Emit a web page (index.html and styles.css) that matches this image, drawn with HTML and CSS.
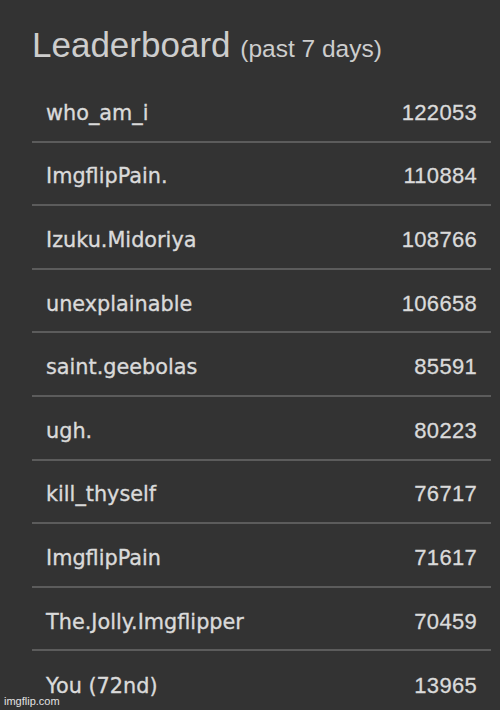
FILE: index.html
```html
<!DOCTYPE html>
<html lang="en">
<head>
<meta charset="utf-8">
<title>Leaderboard</title>
<link rel="stylesheet" href="styles.css">
</head>
<body>
<div class="board">
  <h1 class="title">Leaderboard <span class="sub">(past 7 days)</span></h1>
  <ul class="rows">
    <li class="row"><span class="name">who_am_i</span><span class="score">122053</span></li>
    <li class="row"><span class="name">ImgflipPain.</span><span class="score">110884</span></li>
    <li class="row"><span class="name">Izuku.Midoriya</span><span class="score">108766</span></li>
    <li class="row"><span class="name">unexplainable</span><span class="score">106658</span></li>
    <li class="row"><span class="name">saint.geebolas</span><span class="score">85591</span></li>
    <li class="row"><span class="name">ugh.</span><span class="score">80223</span></li>
    <li class="row"><span class="name">kill_thyself</span><span class="score">76717</span></li>
    <li class="row"><span class="name">ImgflipPain</span><span class="score">71617</span></li>
    <li class="row"><span class="name">The.Jolly.Imgflipper</span><span class="score">70459</span></li>
    <li class="row"><span class="name">You (72nd)</span><span class="score">13965</span></li>
  </ul>
</div>
<div class="watermark">imgflip.com</div>
</body>
</html>
```
FILE: styles.css
```css
html, body {
  margin: 0;
  padding: 0;
  background: #333333;
  height: 710px;
  overflow: hidden;
}
body {
  position: relative;
}
.board {
  padding: 25px 9px 0 32px;
}
.title {
  margin: 0 0 14px 0;
  height: 40px;
  font-family: "Liberation Sans", Arial, sans-serif;
  font-weight: normal;
  font-size: 35px;
  line-height: 40px;
  color: #cdcdcd;
  white-space: nowrap;
}
.sub {
  font-size: 24.5px;
}
.rows {
  list-style: none;
  margin: 0;
  padding: 0;
}
.row {
  box-sizing: border-box;
  display: flex;
  justify-content: space-between;
  align-items: center;
  height: 63.6px;
  padding: 6px 14px 0 14px;
  border-bottom: 2px solid #5c5c5c;
}
.row:last-child {
  border-bottom: none;
}
.name {
  font-family: "DejaVu Sans", Verdana, sans-serif;
  font-size: 20.8px;
  color: #dadada;
  -webkit-text-stroke: 0.35px #dadada;
}
.score {
  font-family: "Liberation Sans", Arial, sans-serif;
  font-size: 22px;
  letter-spacing: 0.3px;
  color: #dadada;
  -webkit-text-stroke: 0.3px #dadada;
}
.watermark {
  position: absolute;
  left: 4px;
  bottom: 3px;
  font-family: "Liberation Sans", Arial, sans-serif;
  font-size: 11px;
  color: #e2e2e2;
}
```
